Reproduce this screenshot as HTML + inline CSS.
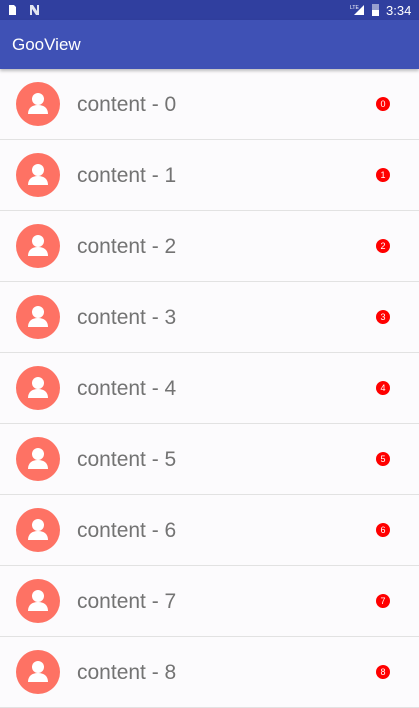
<!DOCTYPE html>
<html><head><style>
body{margin:0;width:419px;height:694px;overflow:hidden;background:#fcfbfd;font-family:"Liberation Sans",sans-serif;position:relative}
.sb{position:absolute;top:0;left:0;width:419px;height:20px;background:#303f9f;color:#fff}
.tb{position:absolute;top:20px;left:0;width:419px;height:49px;background:#3f51b5;box-shadow:0 2px 3px rgba(0,0,0,.25);z-index:2}
.tb span{position:absolute;left:12px;top:15px;font-size:17px;color:#fff}
.row{position:absolute;left:0;width:419px;height:70px;border-bottom:1px solid #e2e2e2}
.av{position:absolute;left:16px;top:13px;width:44px;height:44px;border-radius:50%;background:#fe7264}
.t{position:absolute;left:77px;top:24px;font-size:21px;color:#737373}
.b{position:absolute;left:376px;top:28px;width:14px;height:14px;border-radius:50%;background:#f00;color:#fff;font-size:9px;text-align:center;line-height:14px}
</style></head><body>
<div class="sb">
<svg width="419" height="20" style="position:absolute;left:0;top:0">
<path d="M9 5h5l2 2v8h-7z" fill="#fff"/>
<path d="M30 5h3l4 6v-6h2v10h-3l-4-6v6h-2z" fill="#e0e4f0"/>
<text x="350" y="9" font-size="5" fill="#fff" font-family="Liberation Sans">LTE</text>
<path d="M354 15l10-10v10z" fill="#fff"/>
<rect x="372" y="4" width="7" height="12" fill="#fff" opacity=".5"/><rect x="372" y="10" width="7" height="6" fill="#fff"/>
<text x="386" y="15" font-size="13" fill="#fff" font-family="Liberation Sans">3:34</text>
</svg></div>
<div class="tb"><span>GooView</span></div>
<div id="list"></div>
<script>
var h='';for(var i=0;i<9;i++){h+='<div class="row" style="top:'+(69+i*71)+'px"><div class="av"><svg width="44" height="44"><circle cx="22" cy="17" r="6" fill="#fff"/><path d="M12 32c0-6 4-9 10-9s10 3 10 9z" fill="#fff"/></svg></div><div class="t">content - '+i+'</div><div class="b">'+i+'</div></div>';}
document.getElementById('list').innerHTML=h;
</script>
</body></html>
